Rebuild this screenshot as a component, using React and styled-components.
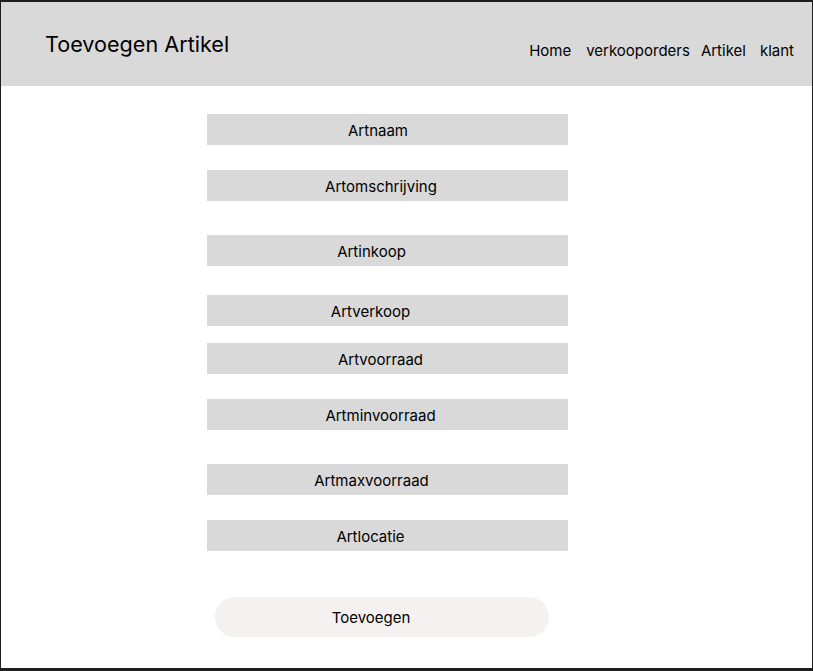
import styled, { createGlobalStyle } from "styled-components";

const GlobalStyle = createGlobalStyle`
  html, body {
    margin: 0;
    padding: 0;
    background-color: #1e1e1e;
  }
  * {
    box-sizing: border-box;
  }
`;

const fields = [
  { label: "Artnaam", top: 28, shift: 19 },
  { label: "Artomschrijving", top: 25, shift: 13 },
  { label: "Artinkoop", top: 34, shift: 32 },
  { label: "Artverkoop", top: 29, shift: 34 },
  { label: "Artvoorraad", top: 17, shift: 14 },
  { label: "Artminvoorraad", top: 25, shift: 14 },
  { label: "Artmaxvoorraad", top: 34, shift: 32 },
  { label: "Artlocatie", top: 25, shift: 34 },
];

export default function App() {
  return (
    <>
      <GlobalStyle />
      <Frame>
        <Header>
          <Title>Toevoegen Artikel</Title>
          <Nav>
            <NavLink href="#" $gap={15}>Home</NavLink>
            <NavLink href="#" $gap={11}>verkooporders</NavLink>
            <NavLink href="#" $gap={14}>Artikel</NavLink>
            <NavLink href="#" $gap={0}>klant</NavLink>
          </Nav>
        </Header>
        <Form>
          {fields.map((f) => (
            <Field key={f.label} $top={f.top} $shift={f.shift}>
              {f.label}
            </Field>
          ))}
          <SubmitButton type="button">Toevoegen</SubmitButton>
        </Form>
      </Frame>
    </>
  );
}

const Frame = styled.div`
  width: 811px;
  height: 666px;
  margin: 2px 0 0 1px;
  background-color: #ffffff;
  font-family: "Inter", "Liberation Sans", sans-serif;
  color: #000000;
  overflow: hidden;
`;

const Header = styled.header`
  height: 84px;
  background-color: #d9d9d9;
  display: flex;
  justify-content: space-between;
  align-items: flex-start;
  padding: 0 18px 0 44px;
`;

const Title = styled.h1`
  margin: 29px 0 0 0;
  font-size: 21.6px;
  font-weight: 400;
  line-height: 26px;
`;

const Nav = styled.nav`
  display: flex;
  align-items: center;
  margin-top: 40px;
`;

const NavLink = styled.a`
  font-size: 15px;
  line-height: 18px;
  color: #000000;
  text-decoration: none;
  margin-right: ${(p) => p.$gap}px;
`;

const Form = styled.form`
  width: 361px;
  margin-left: 206px;
  display: flex;
  flex-direction: column;
`;

const Field = styled.div`
  height: 31px;
  margin-top: ${(p) => p.$top}px;
  background-color: #d9d9d9;
  display: flex;
  align-items: center;
  justify-content: center;
  padding: 2px ${(p) => p.$shift}px 0 0;
  font-size: 15px;
  line-height: 18px;
`;

const SubmitButton = styled.button`
  width: 334px;
  height: 40px;
  margin: 46px 0 0 8px;
  border: none;
  border-radius: 20px;
  background-color: #f4f1f0;
  font-family: "Inter", "Liberation Sans", sans-serif;
  font-size: 15px;
  color: #000000;
  padding: 0 22px 0 0;
  cursor: pointer;
`;
